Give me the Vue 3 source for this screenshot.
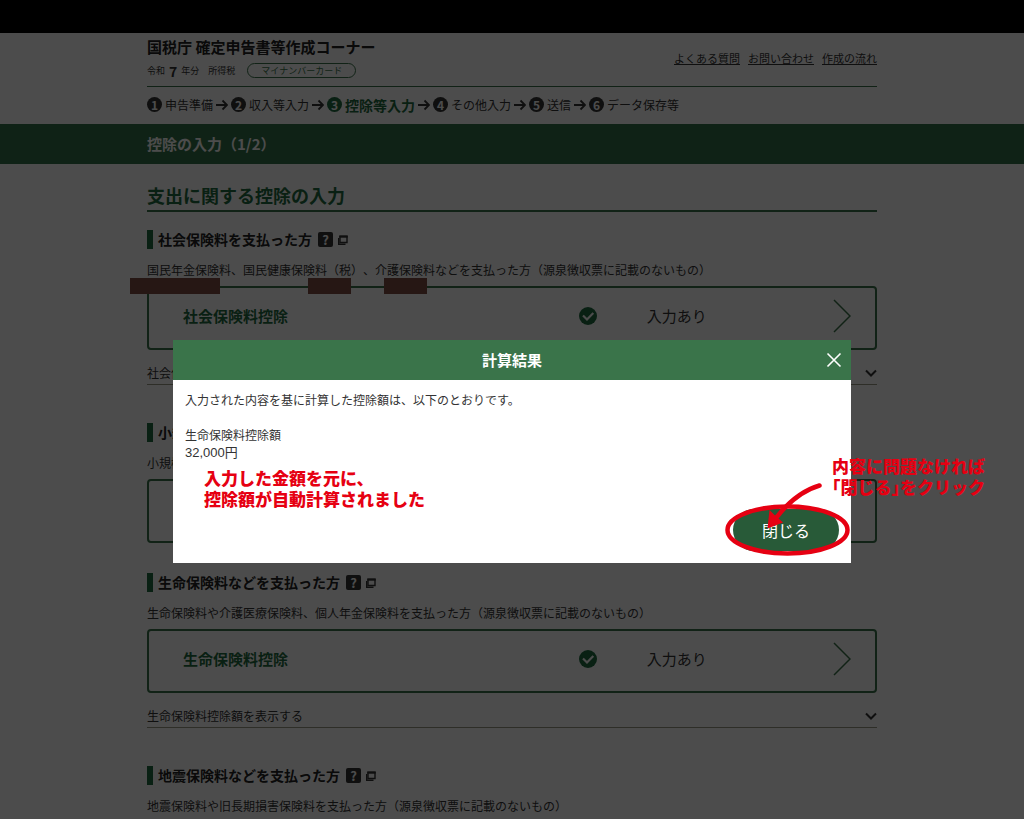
<script setup>
const links = ['よくある質問', 'お問い合わせ', '作成の流れ']

const steps = [
  { label: '申告準備' },
  { label: '収入等入力' },
  { label: '控除等入力', current: true },
  { label: 'その他入力' },
  { label: '送信' },
  { label: 'データ保存等' },
]

const sections = [
  {
    heading: '社会保険料を支払った方',
    note: '国民年金保険料、国民健康保険料（税）、介護保険料などを支払った方（源泉徴収票に記載のないもの）',
    card: '社会保険料控除',
    detail: '社会保険料控除額を表示する',
    masked: true,
    done: true,
  },
  {
    heading: '小規模企業共済等掛金を支払った方',
    note: '小規模企業共済等掛金を支払った方（源泉徴収票に記載のないもの）',
    card: '小規模企業共済等掛金控除',
  },
  {
    heading: '生命保険料などを支払った方',
    note: '生命保険料や介護医療保険料、個人年金保険料を支払った方（源泉徴収票に記載のないもの）',
    card: '生命保険料控除',
    detail: '生命保険料控除額を表示する',
    done: true,
  },
  {
    heading: '地震保険料などを支払った方',
    note: '地震保険料や旧長期損害保険料を支払った方（源泉徴収票に記載のないもの）',
  },
]
</script>

<template>
  <div class="screen">
    <div class="top-bar"></div>
    <div class="page">
      <header class="wrap site-header">
        <div>
          <h1 class="site-title">国税庁 確定申告書等作成コーナー</h1>
          <p class="meta">
            <span>令和</span><b class="year">7</b><span>年分</span>
            <span class="tax">所得税</span>
            <span class="pill">マイナンバーカード</span>
          </p>
        </div>
        <nav class="links">
          <a v-for="l in links" :key="l" href="#">{{ l }}</a>
        </nav>
      </header>

      <ol class="wrap steps">
        <li v-for="(s, i) in steps" :key="s.label" class="step" :class="{ current: s.current }">
          <svg v-if="i" class="step-arrow" width="12" height="12" viewBox="0 0 12 12">
            <path d="M0 6H11M6.500 1.500L11 6L6.500 10.500" fill="none" stroke="currentColor" stroke-width="1.800" />
          </svg>
          <span class="num">{{ i + 1 }}</span>
          <span class="label">{{ s.label }}</span>
        </li>
      </ol>

      <div class="banner"><div class="wrap">控除の入力（1/2）</div></div>

      <main class="wrap">
        <h2 class="main-title">支出に関する控除の入力</h2>
        <section v-for="s in sections" :key="s.heading" class="section">
          <h3 class="heading">
            <span class="heading-text">{{ s.heading }}</span>
            <a class="help" href="#" aria-label="ヘルプ">
              <span class="q">?</span>
              <svg width="10" height="10" viewBox="0 0 10 10">
                <path d="M2 1.500H9V7.500H2Z" fill="none" stroke="currentColor" stroke-width="1.400" />
                <path d="M1.300 1.500H9.700" stroke="currentColor" stroke-width="2.200" />
                <path d="M0.700 3V9.200H7.500" fill="none" stroke="currentColor" stroke-width="1.400" />
              </svg>
            </a>
          </h3>
          <p class="note">{{ s.note }}</p>
          <div v-if="s.card" class="card-area">
            <button type="button" class="card">
              <span class="card-title">{{ s.card }}</span>
              <span class="card-mark">
                <svg v-if="s.done" width="18" height="18" viewBox="0 0 18 18">
                  <circle cx="9" cy="9" r="9" fill="#1f6b40" />
                  <path d="M4 8.500L8 12.500L14.300 6" fill="none" stroke="#fff" stroke-width="2.200" />
                </svg>
              </span>
              <span class="card-status">{{ s.done ? '入力あり' : '' }}</span>
              <svg class="card-go" width="18" height="34" viewBox="0 0 18 34">
                <path d="M1 1L17 17L1 33" fill="none" stroke="#3a744a" stroke-width="1.500" />
              </svg>
            </button>
            <template v-if="s.masked">
              <i class="mask mask-a"></i>
              <i class="mask mask-b"></i>
              <i class="mask mask-c"></i>
            </template>
          </div>
          <button v-if="s.detail" type="button" class="detail">
            <span>{{ s.detail }}</span>
            <svg width="12" height="8" viewBox="0 0 12 8">
              <path d="M1 1.500L6 6.500L11 1.500" fill="none" stroke="currentColor" stroke-width="2" />
            </svg>
          </button>
        </section>
      </main>
    </div>

    <div class="overlay">
      <div class="modal" role="dialog" aria-labelledby="dialog-title">
        <div class="modal-head">
          <h2 id="dialog-title">計算結果</h2>
          <button type="button" class="close-x" aria-label="閉じる">
            <svg width="16" height="16" viewBox="0 0 16 16">
              <path d="M1.500 1.500L14.500 14.500M14.500 1.500L1.500 14.500" stroke="#fff" stroke-width="1.600" />
            </svg>
          </button>
        </div>
        <div class="modal-body">
          <p class="lead">入力された内容を基に計算した控除額は、以下のとおりです。</p>
          <p>生命保険料控除額</p>
          <p class="amount">32,000円</p>
          <p class="callout">入力した金額を元に、<br />控除額が自動計算されました</p>
          <div class="actions">
            <button type="button" class="close-btn">閉じる</button>
          </div>
        </div>
        <p class="callout callout-side">内容に問題なければ<br />「閉じる」をクリック</p>
        <svg class="marker" width="130" height="80" viewBox="0 0 130 80">
          <ellipse cx="65.500" cy="50" rx="60" ry="23.500" fill="none" stroke="#e60012" stroke-width="4.500" />
          <path d="M97.500 5.500C82 10 68 20 54 38" fill="none" stroke="#e60012" stroke-width="4.500" stroke-linecap="round" />
          <path d="M45.500 48.500L47.500 30L52.500 35L61 42.500Z" fill="#e60012" />
        </svg>
      </div>
    </div>
  </div>
</template>

<style>
body {
  margin: 0;
  background: #4c4c4c;
}
</style>

<style scoped>
.screen {
  position: relative;
  min-height: 100vh;
  overflow: hidden;
  display: flex;
  flex-direction: column;
  background: #fff;
  color: #333;
  font-family: 'Noto Sans CJK JP', sans-serif;
  font-size: 12px;
  line-height: 18px;
}
.top-bar {
  height: 33px;
  background: #000;
}
h1, h2, h3, p, ol {
  margin: 0;
  padding: 0;
}
button {
  font: inherit;
  color: inherit;
  background: none;
  border: 0;
  padding: 0;
  text-align: left;
}
svg {
  display: block;
  flex: none;
}
.wrap {
  box-sizing: border-box;
  width: calc(100% - 32px);
  max-width: 730px;
  margin: 0 auto;
}
.site-header {
  display: flex;
  justify-content: space-between;
  align-items: center;
  height: 54px;
  border-bottom: 1px solid #3a744a;
}
.site-title {
  font-size: 15px;
  line-height: 22px;
  color: #222;
}
.meta {
  display: flex;
  align-items: center;
  height: 26px;
  font-size: 9px;
}
.year {
  font-size: 14px;
  margin: 0 4px;
}
.tax {
  margin-left: 9px;
}
.pill {
  margin-left: 12px;
  padding: 0 13px;
  line-height: 13px;
  border: 1px solid #3a744a;
  border-radius: 8px;
  color: #3a744a;
}
.links {
  display: flex;
  gap: 8px;
  margin-bottom: 4px;
  font-size: 11px;
}
.links a {
  color: #333;
}
.steps {
  display: flex;
  align-items: center;
  gap: 3px;
  height: 37px;
  padding-bottom: 2px;
  list-style: none;
}
.step {
  display: flex;
  align-items: center;
  gap: 3px;
}
.step-arrow {
  color: #333;
}
.num {
  width: 15px;
  height: 15px;
  border-radius: 50%;
  background: #333;
  color: #fff;
  font-size: 12px;
  font-weight: 700;
  line-height: 15px;
  text-align: center;
}
.current .label {
  color: #1f6b40;
  font-size: 14px;
  font-weight: 700;
}
.current .num {
  background: #1f6b40;
}
.banner {
  background: #33724a;
  color: #fff;
  font-size: 15px;
  font-weight: 700;
  line-height: 40px;
}
.main-title {
  margin-top: 17px;
  padding-bottom: 1px;
  border-bottom: 2px solid #3a744a;
  color: #1f6b40;
  font-size: 18px;
  line-height: 28px;
}
.section {
  padding-top: 18px;
  padding-bottom: 20px;
}
.section:not(:has(.detail)) {
  padding-bottom: 12px;
}
.heading {
  display: flex;
  align-items: center;
  gap: 6px;
  color: #222;
  font-size: 14px;
  line-height: 19px;
}
.heading-text {
  border-left: 6px solid #1f6b40;
  padding-left: 5px;
}
.help {
  display: flex;
  align-items: center;
  gap: 5px;
  color: #333;
  text-decoration: none;
}
.q {
  width: 15px;
  height: 15px;
  border-radius: 2px;
  background: #333;
  color: #fff;
  font-size: 13px;
  line-height: 15px;
  text-align: center;
}
.note {
  margin-top: 12px;
  text-spacing-trim: space-all;
}
.card-area {
  position: relative;
  margin-top: 7px;
}
.card {
  box-sizing: border-box;
  display: grid;
  grid-template-columns: 391fr 67fr 184fr 18px;
  align-items: center;
  width: 100%;
  height: 64px;
  padding: 0 24px 4px 34px;
  border: 2px solid #3a744a;
  border-radius: 4px;
  font-size: 15px;
}
.card-title {
  color: #1f6b40;
  font-weight: 700;
}
.mask {
  position: absolute;
  top: -8px;
  height: 16px;
  background: #7f4d44;
}
.mask-a {
  left: -17px;
  width: 90px;
}
.mask-b {
  left: 161px;
  width: 43px;
}
.mask-c {
  left: 237px;
  width: 43px;
}
.detail {
  display: flex;
  align-items: center;
  justify-content: space-between;
  width: 100%;
  margin-top: 14px;
  padding-bottom: 2px;
  border-bottom: 1px solid #9a9a86;
}
.overlay {
  position: absolute;
  inset: 33px 0 0;
  padding: 307px 16px 0;
  background: rgba(0, 0, 0, 0.7);
}
.modal {
  position: relative;
  max-width: 678px;
  margin: 0 auto;
  background: #fff;
}
.modal-head {
  display: grid;
  grid-template-columns: 1fr auto 1fr;
  align-items: center;
  height: 40px;
  padding: 0 9px;
  background: #3a744a;
  color: #fff;
}
.modal-head h2 {
  grid-column: 2;
  font-size: 15px;
}
.close-x {
  justify-self: end;
}
.modal-body {
  padding: 11px 12px 12px;
}
.lead {
  margin-bottom: 17px;
}
.amount {
  font-size: 13px;
  font-family: 'Liberation Sans', 'Noto Sans CJK JP', sans-serif;
}
.callout {
  margin: 5px 0 0 19px;
  color: #e60012;
  font-size: 17px;
  font-weight: 900;
  line-height: 21px;
}
.callout-side {
  position: absolute;
  top: 115px;
  right: -134px;
  margin: 0;
  white-space: nowrap;
  font-feature-settings: 'halt';
}
.marker {
  position: absolute;
  right: -1px;
  bottom: 3px;
}
.actions {
  display: flex;
  justify-content: flex-end;
}
.close-btn {
  width: 106px;
  height: 42px;
  padding-bottom: 1px;
  border-radius: 21px;
  background: #285a38;
  color: #fff;
  font-size: 16px;
  text-align: center;
}
</style>
